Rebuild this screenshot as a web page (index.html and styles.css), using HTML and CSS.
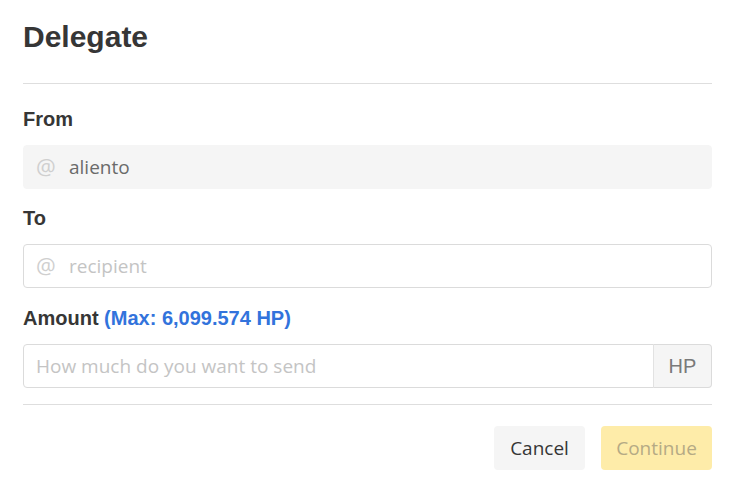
FILE: index.html
```html
<!DOCTYPE html>
<html>
<head>
<meta charset="utf-8">
<link rel="stylesheet" href="styles.css">
</head>
<body>
<div class="modal">
  <h1 class="title">Delegate</h1>
  <div class="divider"></div>
  <div class="field">
    <label class="label">From</label>
    <div class="input readonly">
      <span class="at">@</span>
      <span class="value">aliento</span>
    </div>
  </div>
  <div class="field">
    <label class="label">To</label>
    <div class="input">
      <span class="at">@</span>
      <span class="placeholder">recipient</span>
    </div>
  </div>
  <div class="field amount-field">
    <label class="label">Amount <span class="max">(Max: 6,099.574 HP)</span></label>
    <div class="addons">
      <div class="input grow">
        <span class="placeholder amount">How much do you want to send</span>
      </div>
      <div class="addon">HP</div>
    </div>
  </div>
  <div class="divider bottom"></div>
  <div class="actions">
    <button class="btn cancel">Cancel</button>
    <button class="btn continue">Continue</button>
  </div>
</div>
</body>
</html>
```
FILE: styles.css
```css
html, body {
  margin: 0;
  padding: 0;
  background: #fff;
}
.modal {
  padding: 20px 24px 0 23px;
  font-family: "Liberation Sans", Arial, sans-serif;
  color: #363636;
}
.title {
  margin: 0;
  font-size: 30px;
  line-height: 34px;
  font-weight: 700;
  color: #363636;
}
.divider {
  height: 1px;
  background: #dedede;
  margin-top: 29px;
}
.divider.bottom {
  margin-top: 16px;
}
.field {
  margin-top: 23px;
}
.field + .field {
  margin-top: 17px;
}
.field.amount-field {
  margin-top: 18px;
}
.label {
  display: block;
  font-size: 20px;
  line-height: 24px;
  font-weight: 700;
  color: #363636;
  margin-bottom: 14px;
}
.max {
  color: #3273dc;
}
.input {
  box-sizing: border-box;
  height: 44px;
  border: 1px solid #dbdbdb;
  border-radius: 4px;
  display: flex;
  align-items: center;
  padding-left: 12px;
  font-family: "Open Sans", "Noto Sans", sans-serif;
  font-size: 19px;
}
.input.readonly {
  background: #f5f5f5;
  border-color: #f5f5f5;
}
.at {
  color: #cfcfcf;
  width: 33px;
  font-size: 22px;
  line-height: 1;
  margin-top: -2px;
}
.value {
  color: #6a6a6a;
}
.placeholder {
  color: #c4c4c4;
}
.addons {
  display: flex;
}
.grow {
  flex: 1;
  border-radius: 4px 0 0 4px;
}
.addon {
  box-sizing: border-box;
  height: 44px;
  width: 59px;
  display: flex;
  align-items: center;
  justify-content: center;
  background: #f5f5f5;
  border: 1px solid #dbdbdb;
  border-left: 1px solid #e2e2e2;
  margin-left: -1px;
  border-radius: 0 4px 4px 0;
  color: #7a7a7a;
  font-size: 20px;
}
.actions {
  display: flex;
  justify-content: flex-end;
  gap: 16px;
  margin-top: 21px;
}
.btn {
  box-sizing: border-box;
  height: 44px;
  border: none;
  border-radius: 4px;
  font-family: "Open Sans", "Noto Sans", sans-serif;
  font-size: 19px;
  padding: 0;
}
.cancel {
  background: #f5f5f5;
  color: #363636;
  width: 91px;
}
.continue {
  background: #feeca9;
  color: #b5aa85;
  width: 111px;
}
```
